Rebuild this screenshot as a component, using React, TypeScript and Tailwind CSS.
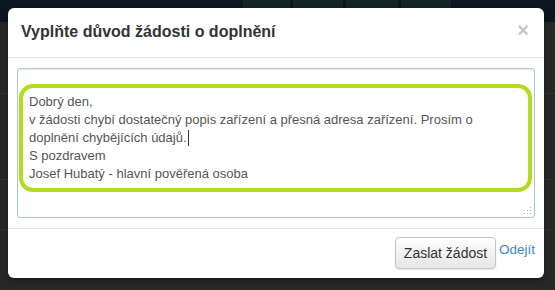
import React from "react";

export default function App() {
  const font = { fontFamily: '"Liberation Sans", Arial, sans-serif' };
  return (
    <div className="relative w-[555px] h-[290px] overflow-hidden bg-[#272727]" style={font}>
      {/* background page */}
      <div className="h-[22px] bg-[#0b1620] flex pl-[243px] gap-[3px]">
        <div className="w-[47px] h-[17px] bg-[#132529]" />
        <div className="w-[50px] h-[17px] bg-[#132529]" />
        <div className="w-[52px] h-[17px] bg-[#132529]" />
        <div className="w-[50px] h-[17px] bg-[#132529]" />
      </div>
      <div className="flex flex-col">
        <div className="h-[72px] border-b border-[#333]" />
        <div className="h-[86px] border-b border-[#333]" />
        <div className="h-[50px] border-b border-[#303030]" />
      </div>

      {/* modal */}
      <div className="absolute left-[8px] top-[8px] w-[536px] h-[270px] bg-white rounded-[6px] shadow-[0_3px_7px_rgba(0,0,0,0.3)] flex flex-col">
        <div className="h-[50px] border-b border-[#e5e5e5] flex items-center justify-between pl-[13px] pr-[15px]">
          <h3 className="text-[16px] font-bold text-[#333] leading-none -mt-[1px]">Vyplňte důvod žádosti o doplnění</h3>
          <span className="text-[20px] font-bold text-[#c8c8c8] leading-none -mt-[5px]">×</span>
        </div>
        <div className="px-[9px] pt-[10px] pb-[10px] border-b border-[#e5e5e5]">
          <div className="relative h-[150px] border border-[#a9c6e0] rounded-[3px] bg-white shadow-[inset_0_1px_1px_rgba(0,0,0,0.075)] pl-[1px] pr-[1px] pt-[15px]">
            <div className="mr-[1px] border-[4px] border-[#b3dc1c] rounded-[14px] pl-[6px] pt-[5px] pb-[5px] text-[13px] leading-[18px] text-[#555]">
              <div>Dobrý den,</div>
              <div>v žádosti chybí dostatečný popis zařízení a přesná adresa zařízení. Prosím o</div>
              <div className="flex items-center">
                doplnění chybějících údajů.<span className="inline-block w-[1px] h-[16px] bg-[#333] ml-[1px]" />
              </div>
              <div>S pozdravem</div>
              <div>Josef Hubatý - hlavní pověřená osoba</div>
            </div>
            <svg className="absolute right-[2px] bottom-[2px]" width="8" height="8" viewBox="0 0 8 8">
              <rect x="6" y="0" width="1" height="1" fill="#aaa" />
              <rect x="3" y="3" width="1" height="1" fill="#aaa" />
              <rect x="6" y="3" width="1" height="1" fill="#aaa" />
              <rect x="0" y="6" width="1" height="1" fill="#aaa" />
              <rect x="3" y="6" width="1" height="1" fill="#aaa" />
              <rect x="6" y="6" width="1" height="1" fill="#aaa" />
            </svg>
          </div>
        </div>
        <div className="flex-1 flex items-center justify-end pr-[9px] pb-[1px]">
          <button className="w-[101px] h-[32px] rounded-[4px] border border-[#c5c5c5] bg-gradient-to-b from-white to-[#e6e6e6] text-[14px] text-[#333] shadow-[0_1px_2px_rgba(0,0,0,0.1)]">
            Zaslat žádost
          </button>
          <span className="ml-[3px] text-[13.5px] text-[#3c87c4] -mt-[5px]">Odejít</span>
        </div>
      </div>
    </div>
  );
}
